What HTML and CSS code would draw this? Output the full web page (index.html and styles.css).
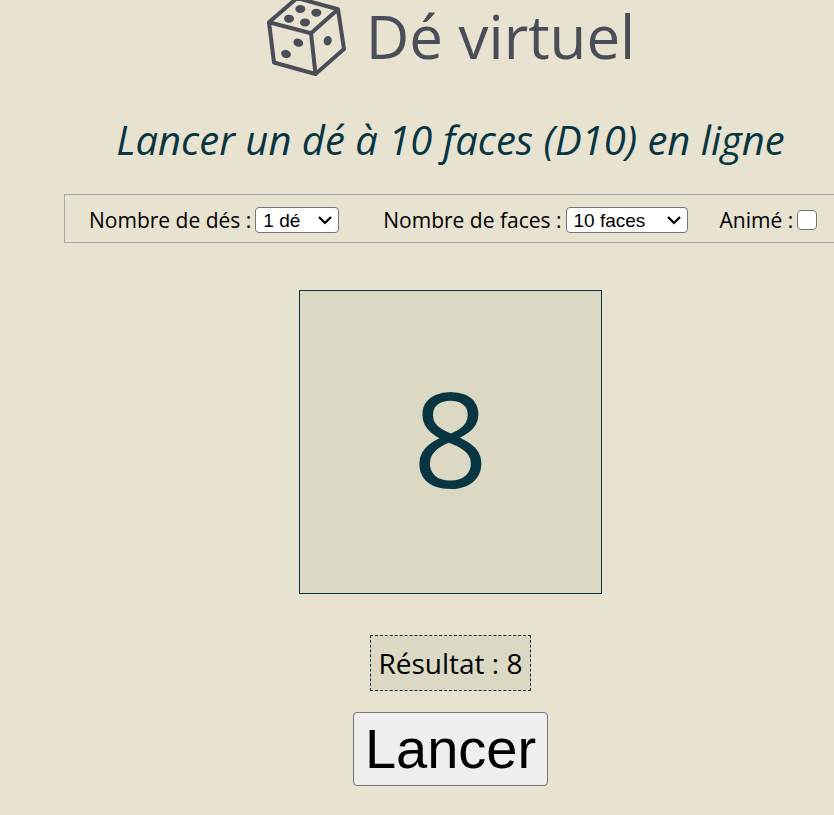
FILE: index.html
```html
<!DOCTYPE html>
<html lang="fr">
  <head>
    <meta charset="UTF-8" />
    <meta name="viewport" content="width=device-width, initial-scale=1.0" />
    <title>Dé virtuel</title>
    <link rel="stylesheet" href="styles.css">
  </head>

  <body>
    <div class="container">
      <header class="header">
        <svg class="logo" viewBox="0 0 80 78" aria-hidden="true">
          <g fill="none" stroke="#4a4e59" stroke-width="4" stroke-linejoin="round">
            <path d="M3 22.3 L31 -2 L72 9.3 L45 33.3 Z" />
            <path d="M3 22.3 L8 62.5 L49.5 74 L45 33.3" />
            <path d="M72 9.3 L78 49 L49.5 74" />
          </g>
          <g fill="#4a4e59">
            <ellipse cx="34.3" cy="9" rx="5" ry="4" />
            <ellipse cx="50.3" cy="12.7" rx="5" ry="4" />
            <ellipse cx="23" cy="18.7" rx="5" ry="4" />
            <ellipse cx="39" cy="22.4" rx="5" ry="4" />
            <ellipse cx="32.3" cy="42.7" rx="5" ry="4" transform="rotate(20 32.3 42.7)" />
            <ellipse cx="20" cy="54" rx="5" ry="4" transform="rotate(20 20 54)" />
            <ellipse cx="61.7" cy="40.7" rx="4" ry="4.8" transform="rotate(15 61.7 40.7)" />
          </g>
        </svg>
        <h1>Dé virtuel</h1>
      </header>
      <h2>Lancer un dé à 10 faces (D10) en ligne</h2>

      <form class="options">
        <div class="option">
          <label for="dice">Nombre de dés :</label>
          <select id="dice" name="dice">
            <option value="1" selected>1 dé</option>
            <option value="2">2 dés</option>
            <option value="3">3 dés</option>
          </select>
        </div>
        <div class="option">
          <label for="faces">Nombre de faces :</label>
          <select id="faces" name="faces" class="faces">
            <option value="6">6 faces</option>
            <option value="10" selected>10 faces</option>
            <option value="20">20 faces</option>
          </select>
        </div>
        <div class="option">
          <label for="animated">Animé :</label>
          <input type="checkbox" id="animated" name="animated" />
        </div>
      </form>

      <div class="die" id="die">8</div>
      <p class="result">Résultat : <span id="total">8</span></p>
      <button type="button" class="button" id="roll">Lancer</button>
    </div>

    <script>
      document.getElementById("roll").addEventListener("click", function () {
        const count = Number(document.getElementById("dice").value);
        const faces = Number(document.getElementById("faces").value);
        const rolls = [];
        for (let i = 0; i < count; i++) {
          rolls.push(Math.floor(Math.random() * faces) + 1);
        }
        document.getElementById("die").textContent = rolls.join(" ");
        document.getElementById("total").textContent = rolls.reduce((a, b) => a + b);
      });
    </script>
  </body>
</html>
```

FILE: styles.css
```css
body {
  font-family: "Open Sans", "Noto Sans", sans-serif;
  background-color: #e8e2d0;
  color: black;
  margin: 0;
  overflow-x: hidden;
}

/* the options bar runs past the right edge of the window */
.container {
  display: flex;
  flex-direction: column;
  align-items: center;
  margin-left: 64px;
  margin-right: -3px;
}

.header {
  display: flex;
  align-items: flex-start;
  gap: 20px;
}

.logo {
  width: 80px;
  height: 78px;
}

h1 {
  font-size: 60px;
  line-height: 72px;
  font-weight: normal;
  color: #4a4e59;
  margin: 0;
}

h2 {
  font-size: 40px;
  line-height: 52px;
  font-weight: normal;
  font-style: italic;
  color: #073642;
  white-space: nowrap;
  margin: 36px 0 28px;
}

.options {
  display: flex;
  align-items: center;
  gap: 32px;
  box-sizing: border-box;
  width: 100%;
  padding: 12px 16px 9px 24px;
  border: 1px solid #a5a8ab;
  font-size: 21px;
  line-height: 26px;
}

.option {
  display: flex;
  align-items: center;
  gap: 4px;
  white-space: nowrap;
}

.option:first-child {
  margin-right: 12px;
}

select {
  appearance: none;
  width: 84px;
  height: 26px;
  padding: 0 24px 0 7px;
  border: 1px solid #767676;
  border-radius: 4px;
  background: white url("data:image/svg+xml,%3Csvg xmlns='http://www.w3.org/2000/svg' width='14' height='10' viewBox='0 0 14 10'%3E%3Cpath d='M1 2l6 6 6-6' fill='none' stroke='black' stroke-width='2.2'/%3E%3C/svg%3E") no-repeat right 6px center;
  color: black;
  font-family: "Liberation Sans", Arial, sans-serif;
  font-size: 19px;
}

.faces {
  width: 122px;
}

input {
  appearance: none;
  width: 20px;
  height: 20px;
  margin: 0;
  border: 1px solid #767676;
  border-radius: 4px;
  background-color: white;
}

input:checked {
  background-color: #0075ff;
}

.die {
  display: flex;
  align-items: center;
  justify-content: center;
  box-sizing: border-box;
  min-width: 303px;
  height: 304px;
  margin-top: 47px;
  padding-bottom: 10px;
  border: 1px solid #073642;
  background-color: #dbd8c4;
  color: #073642;
  font-size: 132px;
  font-weight: 500;
}

.result {
  margin: 41px 0 21px;
  padding: 8px 7px;
  border: 1px dashed #073642;
  background-color: #dbd8c4;
  font-size: 28px;
  line-height: 38px;
}

.button {
  padding: 4px 11px;
  border: 1px solid #767676;
  border-radius: 4px;
  background-color: #efefef;
  color: black;
  font-family: "Liberation Sans", Arial, sans-serif;
  font-size: 56px;
  line-height: 64px;
}
```
